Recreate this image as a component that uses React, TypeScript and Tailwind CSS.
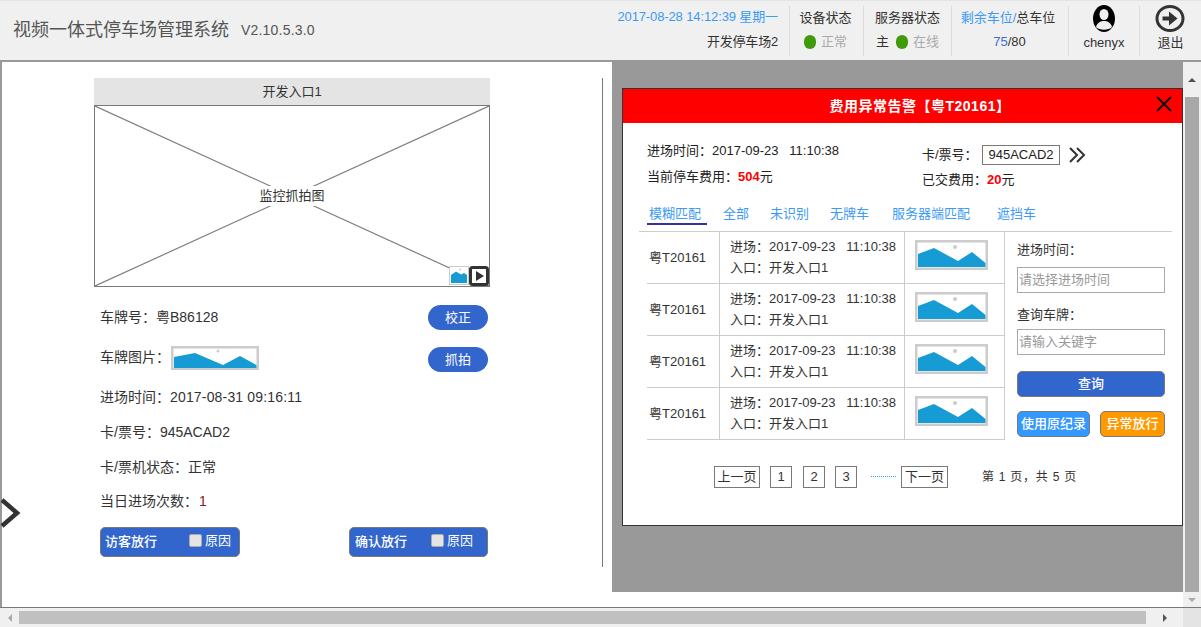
import React from "react";

const Plate = () => (
  <svg className="w-[88px] h-[24px] ml-[1px]" viewBox="0 0 88 24">
    <rect x="1.25" y="1.25" width="85.5" height="21.5" fill="#fff" stroke="#ccc" strokeWidth="2.5" />
    <path d="M3 11 L24 7 L52 19 L69 10 L85.5 19 V22 H3 Z" fill="#169bd5" />
    <circle cx="47" cy="5" r="1.5" fill="#ccc" />
  </svg>
);

const RowThumb = () => (
  <svg className="w-[73px] h-[30px]" viewBox="0 0 73 30">
    <rect x="1.25" y="1.25" width="70.5" height="27.5" fill="#fff" stroke="#ccc" strokeWidth="2.5" />
    <path d="M3 14 L19 8 L43 21 L57 12 L70.5 23 V27 H3 Z" fill="#169bd5" />
    <circle cx="40" cy="7" r="2" fill="#ccc" />
  </svg>
);

const Row = ({ children, m = "mt-[15px]" }: { children: React.ReactNode; m?: string }) => (
  <div className={`h-[20px] ml-[6px] flex items-center text-[14px] text-[#333] ${m}`}>{children}</div>
);

const PageBtn = ({ label, w }: { label: string; w: string }) => (
  <div className={`h-[22px] border border-[#797979] flex items-center justify-center text-[13px] text-[#333] ${w}`}>{label}</div>
);

const records = [0, 1, 2, 3];

export default function App() {
  return (
    <div
      className="w-[1201px] h-[627px] overflow-hidden flex flex-col bg-white text-[#333]"
      style={{ fontFamily: '"Liberation Sans", "Noto Sans CJK SC", sans-serif' }}
    >
      {/* Header */}
      <header className="h-[62px] shrink-0 bg-[#f0f0f0] border-t border-t-[#e4e4e4] border-b-2 border-b-[#999] flex items-center justify-between">
        <div className="pl-[13px] flex items-center text-[#555]">
          <span className="text-[18px]">视频一体式停车场管理系统</span>
          <span className="text-[14px] tracking-[0.2px] ml-[12px]">V2.10.5.3.0</span>
        </div>
        <div className="flex items-center h-[50px] text-[13px]">
          <div className="w-[190px] h-full pr-[11px] border-r border-[#dcdcdc] flex flex-col items-end justify-between pt-[2px]">
            <span className="text-[#3b9af5] leading-[18px] tracking-[-0.12px]">2017-08-28 14:12:39 星期一</span>
            <span className="leading-[18px] mb-[5px] tracking-[-0.2px]">开发停车场2</span>
          </div>
          <div className="w-[74px] h-full border-r border-[#dcdcdc] flex flex-col items-center justify-between pt-[2px]">
            <span className="leading-[18px] pt-[1px] pr-[2px]">设备状态</span>
            <span className="flex items-center gap-[5px] text-[#aaa] leading-[18px] mb-[5px] pr-[2px]">
              <i className="w-[12px] h-[14px] rounded-full bg-[#3f9a0c]" />
              正常
            </span>
          </div>
          <div className="w-[88px] h-full border-r border-[#dcdcdc] flex flex-col items-center justify-between pt-[2px]">
            <span className="leading-[18px] pt-[1px]">服务器状态</span>
            <span className="flex items-center leading-[18px] mb-[5px]">
              主
              <i className="ml-[7px] mr-[5px] w-[12px] h-[14px] rounded-full bg-[#3f9a0c]" />
              <span className="text-[#aaa]">在线</span>
            </span>
          </div>
          <div className="w-[117px] h-full border-r border-[#dcdcdc] flex flex-col items-center justify-between pt-[2px]">
            <span className="leading-[18px] pt-[1px] pr-[4px]">
              <span className="text-[#3b9af5]">剩余车位/</span>总车位
            </span>
            <span className="leading-[18px] mb-[5px] pr-[1px]">
              <span className="text-[#3b6fd5]">75</span>/80
            </span>
          </div>
          <div className="w-[71px] h-full border-r border-[#dcdcdc] flex flex-col items-center justify-between">
            <svg width="22" height="27" viewBox="0 0 22 27" className="mt-[-1px]">
              <ellipse cx="11" cy="13.5" rx="11" ry="13.5" fill="#000" />
              <ellipse cx="11" cy="9.5" rx="4.5" ry="5.5" fill="#f0f0f0" />
              <path d="M3 22 C4.5 17 8 16 11 16 C14 16 17.5 17 19 22 C16 25.5 6 25.5 3 22 Z" fill="#f0f0f0" />
            </svg>
            <span className="leading-[18px] mb-[4px]">chenyx</span>
          </div>
          <div className="w-[61px] h-full flex flex-col items-center justify-between">
            <svg width="30" height="27" viewBox="0 0 30 27" className="mt-[-1px] mr-[2px]">
              <ellipse cx="15" cy="13.5" rx="13" ry="12" fill="none" stroke="#333" strokeWidth="3" />
              <path d="M7.5 11.5 H14 V6.5 L22.5 13.5 L14 20.5 V15.5 H7.5 Z" fill="#333" />
            </svg>
            <span className="leading-[18px] mb-[4px]">退出</span>
          </div>
        </div>
      </header>

      {/* Body */}
      <div className="flex h-[545px] shrink-0">
        {/* Left pane */}
        <section className="relative w-[612px] h-[545px] border-l-2 border-[#999] bg-white flex">
          <div className="ml-[92px] w-[396px] pt-[16px]">
            <div className="h-[27px] bg-[#e4e4e4] flex items-center justify-center text-[13px]">开发入口1</div>
            <div className="relative h-[182px] border border-[#797979] flex items-center justify-center text-[13px]">
              <svg className="absolute inset-0 w-full h-full" viewBox="0 0 394 180" preserveAspectRatio="none">
                <path d="M0 0 L394 180 M394 0 L0 180" stroke="#7f7f7f" strokeWidth="1.2" fill="none" />
              </svg>
              <span className="relative bg-white px-[1px]">监控抓拍图</span>
              <svg className="absolute right-[20px] bottom-[1px] w-[20px] h-[19px]" viewBox="0 0 20 19">
                <rect x="0.5" y="0.5" width="19" height="18" fill="#fff" stroke="#ccc" />
                <path d="M2 9 L7 5.5 L12 8.5 L15 7 L18 9 V17 H2 Z" fill="#169bd5" />
                <circle cx="11" cy="3.5" r="1" fill="#ccc" />
              </svg>
              <svg className="absolute right-0 bottom-0 w-[20px] h-[20px]" viewBox="0 0 20 20">
                <rect x="1.5" y="1.5" width="17" height="17" rx="2" fill="#fff" stroke="#333" strokeWidth="3" />
                <path d="M7 5 L15 10 L7 15 Z" fill="#333" />
              </svg>
            </div>

            <div className="h-[25px] mt-[18px] ml-[6px] mr-[2px] flex items-center justify-between text-[14px]">
              <span>车牌号：粤B86128</span>
              <button className="w-[60px] h-[25px] rounded-full bg-[#3366cc] text-white text-[13px]">校正</button>
            </div>
            <div className="h-[25px] mt-[17px] ml-[6px] mr-[2px] flex items-center justify-between text-[14px]">
              <span className="flex items-center mt-[-4px]">
                车牌图片：
                <Plate />
              </span>
              <button className="w-[60px] h-[25px] rounded-full bg-[#3366cc] text-white text-[13px]">抓拍</button>
            </div>
            <Row>
              进场时间：<span className="tracking-[0.17px]">2017-08-31 09:16:11</span>
            </Row>
            <Row>卡/票号：945ACAD2</Row>
            <Row>卡/票机状态：正常</Row>
            <Row m="mt-[14px]">
              当日进场次数：<span className="text-[#8b1a1a] ml-[1px]">1</span>
            </Row>
            <div className="mt-[16px] ml-[6px] mr-[2px] flex justify-between text-[13px] text-white">
              <div className="w-[140px] h-[30px] rounded-[5px] border border-[#797979] bg-[#3366cc] flex items-center pl-[4px]">
                <span className="font-medium">访客放行</span>
                <i className="ml-[32px] w-[13px] h-[13px] rounded-[2px] bg-[#e4e4e4] border border-[#aaa] mt-[-3px]" />
                <span className="ml-[3px] mt-[-2px]">原因</span>
              </div>
              <div className="w-[139px] h-[30px] rounded-[5px] border border-[#797979] bg-[#3366cc] flex items-center pl-[5px]">
                <span className="font-medium">确认放行</span>
                <i className="ml-[24px] w-[13px] h-[13px] rounded-[2px] bg-[#e4e4e4] border border-[#aaa] mt-[-3px]" />
                <span className="ml-[3px] mt-[-2px]">原因</span>
              </div>
            </div>
          </div>
          <div className="ml-[112px] mt-[16px] w-px h-[489px] bg-[#797979]" />
          <svg className="absolute left-[-2px] top-[436px] w-[22px] h-[30px]" viewBox="0 0 22 30">
            <path d="M2 2 L17 15 L2 28" fill="none" stroke="#333" strokeWidth="4.5" />
          </svg>
        </section>

        {/* Overlay panel with modal */}
        <section className="w-[571px] h-[545px] flex flex-col">
          <div className="h-[530px] bg-[#999] pl-[10px] pt-[26px]">
            <div className="w-[561px] h-[438px] border border-[#333] bg-white">
              <div className="h-[34px] bg-[#ff0000] relative flex items-center justify-center pl-[35px] tracking-[0.5px] text-white font-bold text-[14px]">
                费用异常告警【粤T20161】
                <svg className="absolute right-[9px] top-[6px] w-[18px] h-[18px]" viewBox="0 0 18 18">
                  <path d="M2 2 L16 16 M16 2 L2 16" stroke="#111" strokeWidth="2" />
                </svg>
              </div>

              {/* Info */}
              <div className="h-[75px] pl-[24px] flex text-[13px] text-[#222]">
                <div className="w-[275px] pt-[19px]">
                  <div className="h-[18px] leading-[18px] whitespace-pre">进场时间：2017-09-23   11:10:38</div>
                  <div className="h-[18px] leading-[18px] mt-[8px]">
                    当前停车费用：<span className="text-[#ff0000] font-bold">504</span>元
                  </div>
                </div>
                <div className="pt-[22px]">
                  <div className="flex items-center h-[20px]">
                    <span className="w-[60px]">卡/票号：</span>
                    <span className="w-[78px] h-[20px] border border-[#797979] flex items-center justify-center">945ACAD2</span>
                    <svg className="ml-[8px] w-[18px] h-[18px]" viewBox="0 0 18 18">
                      <path d="M2 2 L9 9 L2 16 M9 2 L16 9 L9 16" fill="none" stroke="#333" strokeWidth="2" />
                    </svg>
                  </div>
                  <div className="h-[18px] leading-[18px] mt-[6px]">
                    已交费用：<span className="text-[#ff0000] font-bold">20</span>元
                  </div>
                </div>
              </div>

              {/* Tabs */}
              <div className="h-[33px] ml-[24px] flex text-[13px] text-[#3b9af5]">
                <div className="w-[60px] h-[27px] pt-[6px] pl-[2px] border-b-2 border-[#333399] mr-[16px]">模糊匹配</div>
                <div className="pt-[6px] mr-[21px]">全部</div>
                <div className="pt-[6px] mr-[21px]">未识别</div>
                <div className="pt-[6px] mr-[23px]">无牌车</div>
                <div className="pt-[6px] mr-[27px]">服务器端匹配</div>
                <div className="pt-[6px]">遮挡车</div>
              </div>

              {/* Table and search */}
              <div className="ml-[16px] w-[533px] border-t border-[#ccc] flex">
                <div className="ml-[8px] w-[358px]">
                  {records.map((r) => (
                    <div key={r} className="grid grid-cols-[72px_185px_101px] h-[52px] border-b border-[#ccc] text-[13px]">
                      <div className="flex items-center pl-[2px] pt-[1px]">粤T20161</div>
                      <div className="border-l border-[#ccc] pl-[10px] pt-[5px]">
                        <div className="leading-[20px] whitespace-pre">进场：2017-09-23   11:10:38</div>
                        <div className="leading-[20px] mt-[1px]">入口：开发入口1</div>
                      </div>
                      <div className="border-l border-r border-[#ccc] pl-[10px] pt-[8px]">
                        <RowThumb />
                      </div>
                    </div>
                  ))}
                </div>
                <div className="ml-[12px] w-[148px] text-[13px]">
                  <div className="h-[35px] pt-[9px] leading-[18px]">进场时间：</div>
                  <div className="h-[26px] border border-[#aaa] flex items-center pl-[1px] text-[#999]">请选择进场时间</div>
                  <div className="h-[36px] pt-[13px] leading-[18px]">查询车牌：</div>
                  <div className="h-[26px] border border-[#aaa] flex items-center pl-[1px] text-[#999]">请输入关键字</div>
                  <div className="h-[26px] mt-[16px] rounded-[5px] border border-[#797979] bg-[#3366cc] text-white font-medium flex items-center justify-center">查询</div>
                  <div className="mt-[14px] flex justify-between text-white">
                    <div className="w-[73px] h-[26px] rounded-[5px] border border-[#797979] bg-[#3399ff] flex items-center justify-center font-medium">使用原纪录</div>
                    <div className="w-[65px] h-[26px] rounded-[5px] border border-[#797979] bg-[#ff9900] flex items-center justify-center font-medium">异常放行</div>
                  </div>
                </div>
              </div>

              {/* Pagination */}
              <div className="mt-[26px] ml-[91px] flex items-center text-[13px]">
                <PageBtn label="上一页" w="w-[46px]" />
                <div className="ml-[10px]"><PageBtn label="1" w="w-[22px]" /></div>
                <div className="ml-[11px]"><PageBtn label="2" w="w-[22px]" /></div>
                <div className="ml-[10px]"><PageBtn label="3" w="w-[22px]" /></div>
                <div className="ml-[14px] w-[25px] border-t border-dotted border-[#3b9af5] mt-[-1px]" />
                <div className="ml-[5px]"><PageBtn label="下一页" w="w-[47px]" /></div>
                <span className="ml-[34px] text-[12px] tracking-[0.75px]">第 1 页，共 5 页</span>
              </div>
            </div>
          </div>
        </section>

        {/* Vertical scrollbar */}
        <aside className="w-[18px] h-[545px] bg-[#f0f0f0] flex flex-col items-center">
          <div className="h-[35px] w-full flex items-center justify-center">
            <div className="w-0 h-0 border-x-[4px] border-x-transparent border-b-[4px] border-b-[#555]" />
          </div>
          <div className="w-[14px] h-[495px] bg-[#a8a8a8]" />
          <div className="flex-1 w-full flex items-center justify-center">
            <div className="w-0 h-0 border-x-[4px] border-x-transparent border-t-[4px] border-t-[#aaa]" />
          </div>
        </aside>
      </div>

      {/* Horizontal scrollbar */}
      <footer className="h-[20px] shrink-0 border-t border-[#797979] bg-[#f0f0f0] flex items-center">
        <div className="w-[19px] flex items-center justify-center">
          <div className="w-0 h-0 border-y-[4px] border-y-transparent border-r-[4px] border-r-[#aaa]" />
        </div>
        <div className="w-[1127px] h-[13px] bg-[#c0c0c0]" />
        <div className="flex-1 flex items-center justify-center pl-[1px]">
          <div className="w-0 h-0 border-y-[4px] border-y-transparent border-l-[4px] border-l-[#555]" />
        </div>
        <div className="w-[18px] h-full bg-[#e4e4e4]" />
      </footer>
    </div>
  );
}
